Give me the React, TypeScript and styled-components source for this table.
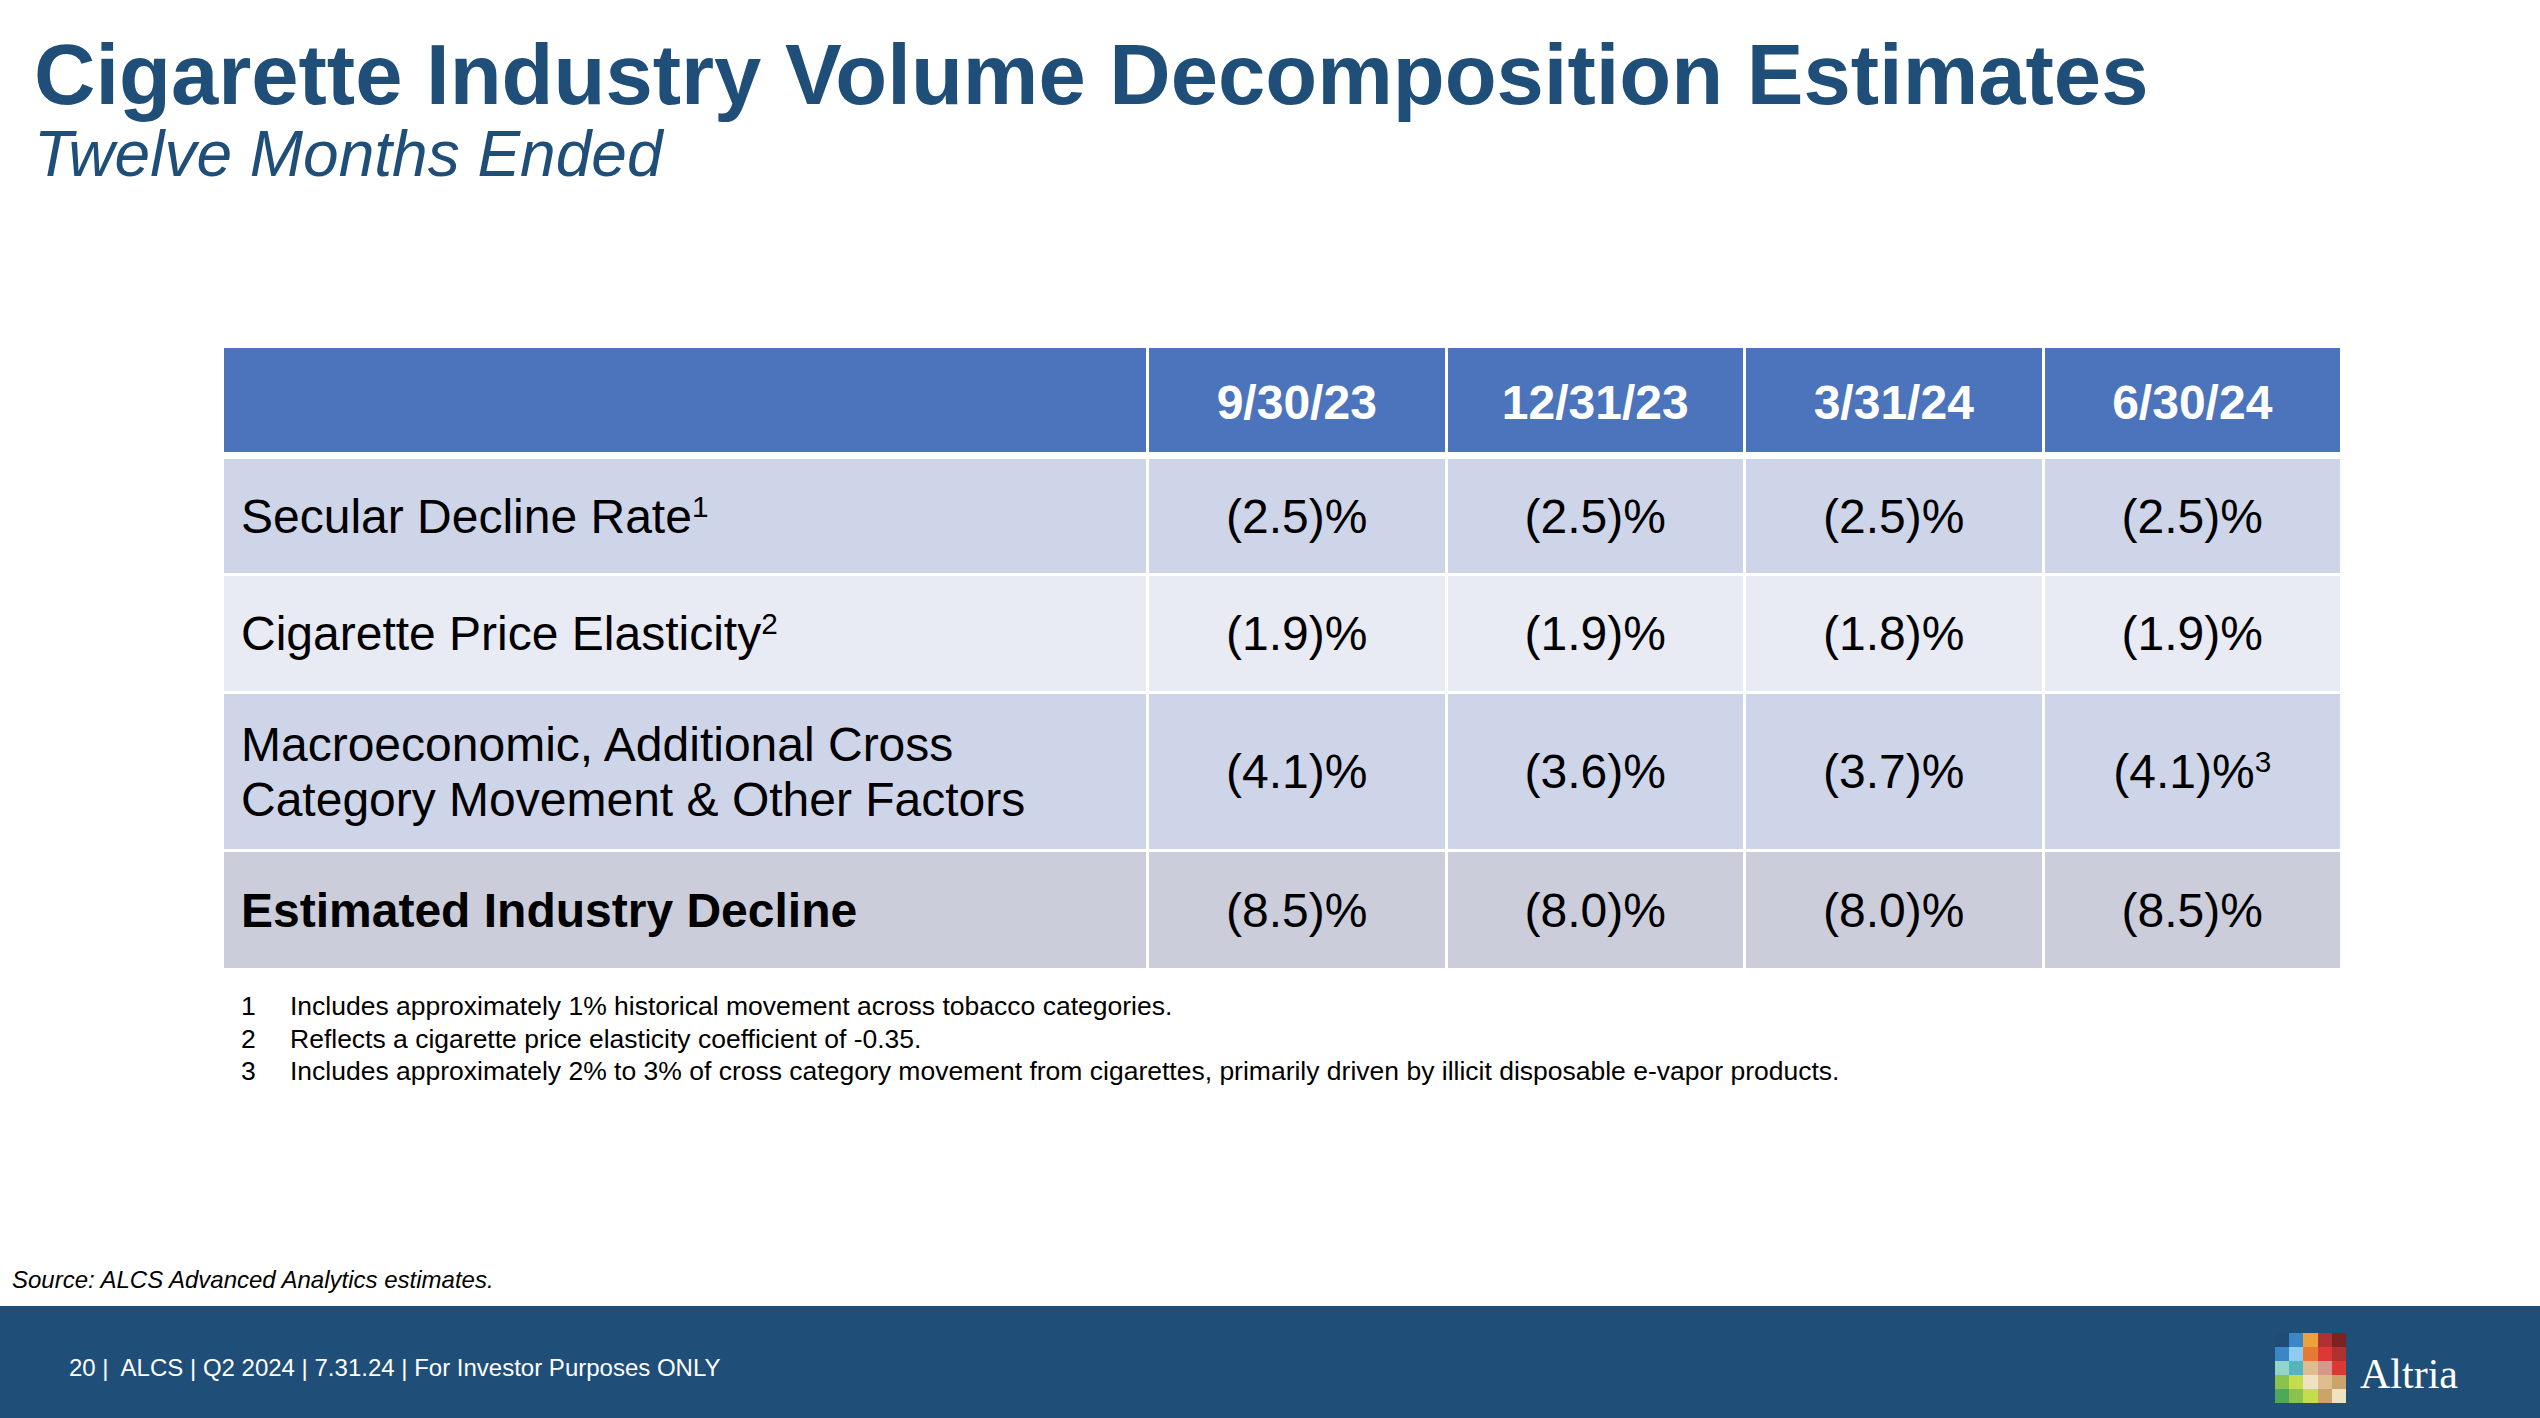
import styled, { createGlobalStyle } from 'styled-components';

const GlobalStyle = createGlobalStyle`
  html, body {
    margin: 0;
    padding: 0;
    background: #ffffff;
  }
  * {
    box-sizing: border-box;
  }
`;

const NAVY = '#1f4e79';
const SANS = '"Liberation Sans", Arial, Helvetica, sans-serif';

const dates = ['9/30/23', '12/31/23', '3/31/24', '6/30/24'];

type Row = {
  label: string;
  note?: string;
  secondLine?: string;
  values: { v: string; note?: string }[];
  tone: 'mid' | 'light' | 'total';
  height: number;
  bold?: boolean;
};

const rows: Row[] = [
  {
    label: 'Secular Decline Rate',
    note: '1',
    values: [{ v: '(2.5)%' }, { v: '(2.5)%' }, { v: '(2.5)%' }, { v: '(2.5)%' }],
    tone: 'mid',
    height: 114
  },
  {
    label: 'Cigarette Price Elasticity',
    note: '2',
    values: [{ v: '(1.9)%' }, { v: '(1.9)%' }, { v: '(1.8)%' }, { v: '(1.9)%' }],
    tone: 'light',
    height: 115
  },
  {
    label: 'Macroeconomic, Additional Cross',
    secondLine: 'Category Movement & Other Factors',
    values: [{ v: '(4.1)%' }, { v: '(3.6)%' }, { v: '(3.7)%' }, { v: '(4.1)%', note: '3' }],
    tone: 'mid',
    height: 155
  },
  {
    label: 'Estimated Industry Decline',
    values: [{ v: '(8.5)%' }, { v: '(8.0)%' }, { v: '(8.0)%' }, { v: '(8.5)%' }],
    tone: 'total',
    height: 116,
    bold: true
  }
];

const footnotes = [
  'Includes approximately 1% historical movement across tobacco categories.',
  'Reflects a cigarette price elasticity coefficient of -0.35.',
  'Includes approximately 2% to 3% of cross category movement from cigarettes, primarily driven by illicit disposable e-vapor products.'
];

// altria mosaic, row by row
const mosaic = [
  '#204a77', '#3b87c5', '#eca23a', '#b03131', '#7d2221',
  '#3b87c5', '#8fcbf0', '#e67a35', '#dd3934', '#b03131',
  '#93d4c9', '#55b5bd', '#dfbd8f', '#d6988a', '#dd3934',
  '#89c24f', '#c5dd4d', '#eee2c3', '#dfbd8f', '#cba46a',
  '#4ea85c', '#89c24f', '#c5dd4d', '#cba46a', '#eee2c3'
];

const App = () => {
  return (
    <>
      <GlobalStyle />
      <Slide>
        <TitleBlock>
          <Title>Cigarette Industry Volume Decomposition Estimates</Title>
          <Subtitle>Twelve Months Ended</Subtitle>
        </TitleBlock>

        <Content>
          <Table>
            <HeaderRow>
              <HeadCell />
              {dates.map(d => (
                <HeadCell key={d}>{d}</HeadCell>
              ))}
            </HeaderRow>
            {rows.map(row => (
              <BodyRow key={row.label} $height={row.height}>
                <LabelCell $tone={row.tone} $bold={row.bold}>
                  <span>
                    {row.label}
                    {row.note && <Sup>{row.note}</Sup>}
                    {row.secondLine && (
                      <>
                        <br />
                        {row.secondLine}
                      </>
                    )}
                  </span>
                </LabelCell>
                {row.values.map((val, i) => (
                  <ValueCell key={i} $tone={row.tone}>
                    <span>
                      {val.v}
                      {val.note && <Sup>{val.note}</Sup>}
                    </span>
                  </ValueCell>
                ))}
              </BodyRow>
            ))}
          </Table>

          <Footnotes>
            {footnotes.map((f, i) => (
              <Footnote key={i}>
                <span>{i + 1}</span>
                <span>{f}</span>
              </Footnote>
            ))}
          </Footnotes>
        </Content>

        <Spacer />
        <Source>Source: ALCS Advanced Analytics estimates.</Source>

        <Footer>
          <FooterText>20 |&nbsp; ALCS | Q2 2024 | 7.31.24 | For Investor Purposes ONLY</FooterText>
          <Logo>
            <Mosaic>
              {mosaic.map((c, i) => (
                <Tile key={i} $color={c} />
              ))}
            </Mosaic>
            <LogoWord>Altria</LogoWord>
          </Logo>
        </Footer>
      </Slide>
    </>
  );
};

const toneColors = {
  mid: '#cfd5e8',
  light: '#e8eaf4',
  total: '#cbcdda'
};

const Slide = styled.div`
  width: 2540px;
  height: 1418px;
  display: flex;
  flex-direction: column;
  overflow: hidden;
  background: #ffffff;
  font-family: ${SANS};
  color: #000000;
`;

const TitleBlock = styled.header`
  padding: 32px 0 0 34px;
  color: ${NAVY};
`;

const Title = styled.h1`
  margin: 0;
  font-size: 85px;
  line-height: 1;
  font-weight: 700;
`;

const Subtitle = styled.h2`
  margin: 5px 0 0;
  font-size: 64px;
  line-height: 1;
  font-weight: 400;
  font-style: italic;
`;

const Content = styled.section`
  padding-left: 224px;
  margin-top: 162px;
`;

const Table = styled.div`
  width: 2116px;
  display: flex;
  flex-direction: column;
  gap: 3px;
`;

const HeaderRow = styled.div`
  display: grid;
  grid-template-columns: 922px repeat(4, 1fr);
  column-gap: 3px;
  height: 104px;
  margin-bottom: 4px;
`;

const HeadCell = styled.div`
  background: #4b74bc;
  color: #ffffff;
  font-size: 48px;
  font-weight: 700;
  display: flex;
  align-items: center;
  justify-content: center;
  padding-top: 4px;
`;

const BodyRow = styled.div<{ $height: number }>`
  display: grid;
  grid-template-columns: 922px repeat(4, 1fr);
  column-gap: 3px;
  height: ${p => p.$height}px;
`;

const LabelCell = styled.div<{ $tone: keyof typeof toneColors; $bold?: boolean }>`
  background: ${p => toneColors[p.$tone]};
  display: flex;
  align-items: center;
  padding-left: 17px;
  font-size: 48px;
  line-height: 55px;
  font-weight: ${p => (p.$bold ? 700 : 400)};
`;

const ValueCell = styled.div<{ $tone: keyof typeof toneColors }>`
  background: ${p => toneColors[p.$tone]};
  display: flex;
  align-items: center;
  justify-content: center;
  font-size: 48px;
  line-height: 55px;
`;

const Sup = styled.sup`
  font-size: 0.62em;
  line-height: 0;
  vertical-align: 0.55em;
  font-weight: 400;
`;

const Footnotes = styled.div`
  margin-top: 22px;
  padding-left: 17px;
`;

const Footnote = styled.div`
  display: grid;
  grid-template-columns: 49px 1fr;
  font-size: 26.5px;
  line-height: 32.5px;
`;

const Spacer = styled.div`
  flex: 1;
`;

const Source = styled.div`
  padding-left: 12px;
  margin-bottom: 12px;
  font-size: 24px;
  line-height: 28px;
  font-style: italic;
`;

const Footer = styled.footer`
  height: 112px;
  flex-shrink: 0;
  background: ${NAVY};
  display: flex;
  align-items: center;
  justify-content: space-between;
  padding: 12px 82px 0 69px;
`;

const FooterText = styled.div`
  color: #ffffff;
  font-size: 24px;
`;

const Logo = styled.div`
  display: flex;
  align-items: center;
  gap: 14px;
`;

const Mosaic = styled.div`
  width: 71px;
  height: 71px;
  display: grid;
  grid-template-columns: repeat(5, 1fr);
  grid-template-rows: repeat(5, 1fr);
`;

const Tile = styled.div<{ $color: string }>`
  background: ${p => p.$color};
`;

const LogoWord = styled.div`
  margin-top: 11px;
  color: #ffffff;
  font-family: "Liberation Serif", "Times New Roman", serif;
  font-size: 42px;
  line-height: 1;
`;

export default App;
